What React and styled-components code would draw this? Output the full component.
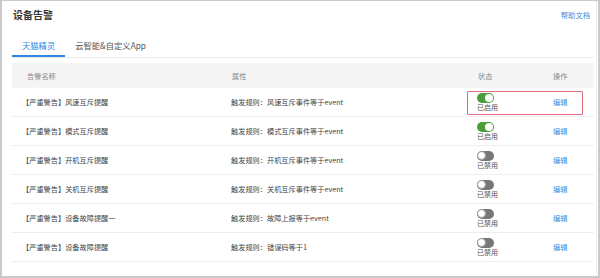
import React from 'react'
import styled, { createGlobalStyle } from 'styled-components'

const GlobalStyle = createGlobalStyle`
  body {
    margin: 0;
    background: #fff;
    font-family: "Noto Sans CJK SC", "Noto Sans", sans-serif;
  }
`

const alarms = [
  { name: '【严重警告】风速互斥提醒', rule: '触发规则：风速互斥事件等于event', on: true, marked: true },
  { name: '【严重警告】模式互斥提醒', rule: '触发规则：模式互斥事件等于event', on: true },
  { name: '【严重警告】开机互斥提醒', rule: '触发规则：开机互斥事件等于event', on: false },
  { name: '【严重警告】关机互斥提醒', rule: '触发规则：关机互斥事件等于event', on: false },
  { name: '【严重警告】设备故障提醒一', rule: '触发规则：故障上报等于event', on: false },
  { name: '【严重警告】设备故障提醒', rule: '触发规则：错误码等于1', on: false },
]

const App = () => {
  return (
    <Frame>
      <GlobalStyle />
      <Panel>
        <TitleBar>
          <Title>设备告警</Title>
          <HelpLink>帮助文档</HelpLink>
        </TitleBar>
        <TabBar>
          <Tab active>天猫精灵</Tab>
          <Tab>云智能&amp;自定义App</Tab>
        </TabBar>
        <Table>
          <HeadRow>
            <HeadCell first>告警名称</HeadCell>
            <HeadCell>属性</HeadCell>
            <HeadCell>状态</HeadCell>
            <HeadCell>操作</HeadCell>
          </HeadRow>
          {alarms.map((a) => (
            <Row key={a.name}>
              <NameCell>{a.name}</NameCell>
              <Cell>{a.rule}</Cell>
              <StatusCell>
                <Switch on={a.on}>
                  <Knob on={a.on} />
                </Switch>
                <StatusText>{a.on ? '已启用' : '已禁用'}</StatusText>
              </StatusCell>
              <Cell>
                <EditLink>编辑</EditLink>
              </Cell>
              {a.marked && <Highlight />}
            </Row>
          ))}
        </Table>
      </Panel>
    </Frame>
  )
}

const Frame = styled.div`
  width: 600px;
  height: 278px;
  box-sizing: border-box;
  border: 2px solid #c9c9c9;
  border-top-width: 1px;
  background: #fff;
  overflow: hidden;
`

const Panel = styled.div`
  height: 100%;
  box-sizing: border-box;
  padding: 0 2px 0 10px;
  border-right: 1px solid #ececec;
  margin-right: 1px;
`

const TitleBar = styled.div`
  height: 27px;
  display: flex;
  align-items: center;
  justify-content: space-between;
  padding: 0 4px 0 1px;
`

const Title = styled.div`
  font-size: 10px;
  font-weight: 700;
  color: #333;
`

const HelpLink = styled.a`
  font-size: 7.3px;
  color: #3a8ee0;
`

const TabBar = styled.div`
  margin-top: 8px;
  display: flex;
  border-bottom: 1px solid #eaeaea;
`

const Tab = styled.div`
  height: 19px;
  line-height: 19px;
  padding: 0 10px;
  font-size: 8.3px;
  color: ${(p) => (p.active ? '#2f88e0' : '#555')};
  border-bottom: 2px solid ${(p) => (p.active ? '#2f88e0' : 'transparent')};
`

const Table = styled.div`
  margin-top: 5px;
`

const grid = `
  display: grid;
  grid-template-columns: 219px 246px 75px 1fr;
  align-items: center;
`

const HeadRow = styled.div`
  ${grid}
  height: 25px;
  background: #f5f5f5;
`

const HeadCell = styled.div`
  font-size: 7.2px;
  color: #888;
  padding-left: ${(p) => (p.first ? 15 : 1)}px;
`

const Row = styled.div`
  ${grid}
  position: relative;
  height: 28px;
  border-bottom: 1px solid #eeeeee;
`

const Cell = styled.div`
  font-size: 7.2px;
  color: #444;
`

const NameCell = styled(Cell)`
  padding-left: 10px;
`

const StatusCell = styled.div`
  display: flex;
  flex-direction: column;
  align-items: flex-start;
`

const Switch = styled.div`
  width: 17px;
  height: 10px;
  box-sizing: border-box;
  border-radius: 5px;
  background: ${(p) => (p.on ? '#4a9e3a' : '#777')};
  display: flex;
  justify-content: ${(p) => (p.on ? 'flex-end' : 'flex-start')};
  align-items: center;
  padding: 0 1px;
`

const Knob = styled.div`
  width: ${(p) => (p.on ? 8 : 9)}px;
  height: ${(p) => (p.on ? 8 : 9)}px;
  box-sizing: border-box;
  border-radius: 50%;
  background: #fff;
  border: ${(p) => (p.on ? 'none' : '1px solid #9a9a9a')};
  margin-left: ${(p) => (p.on ? 0 : -1)}px;
`

const StatusText = styled.div`
  font-size: 7px;
  line-height: 8px;
  color: #555;
  margin-top: 0.5px;
`

const EditLink = styled.a`
  color: #3a8ee0;
  padding-left: 1px;
`

const Highlight = styled.div`
  position: absolute;
  left: 455px;
  top: 3px;
  width: 116px;
  height: 24px;
  box-sizing: border-box;
  border: 1px solid #e06c82;
  border-radius: 1px;
  pointer-events: none;
`

export default App
